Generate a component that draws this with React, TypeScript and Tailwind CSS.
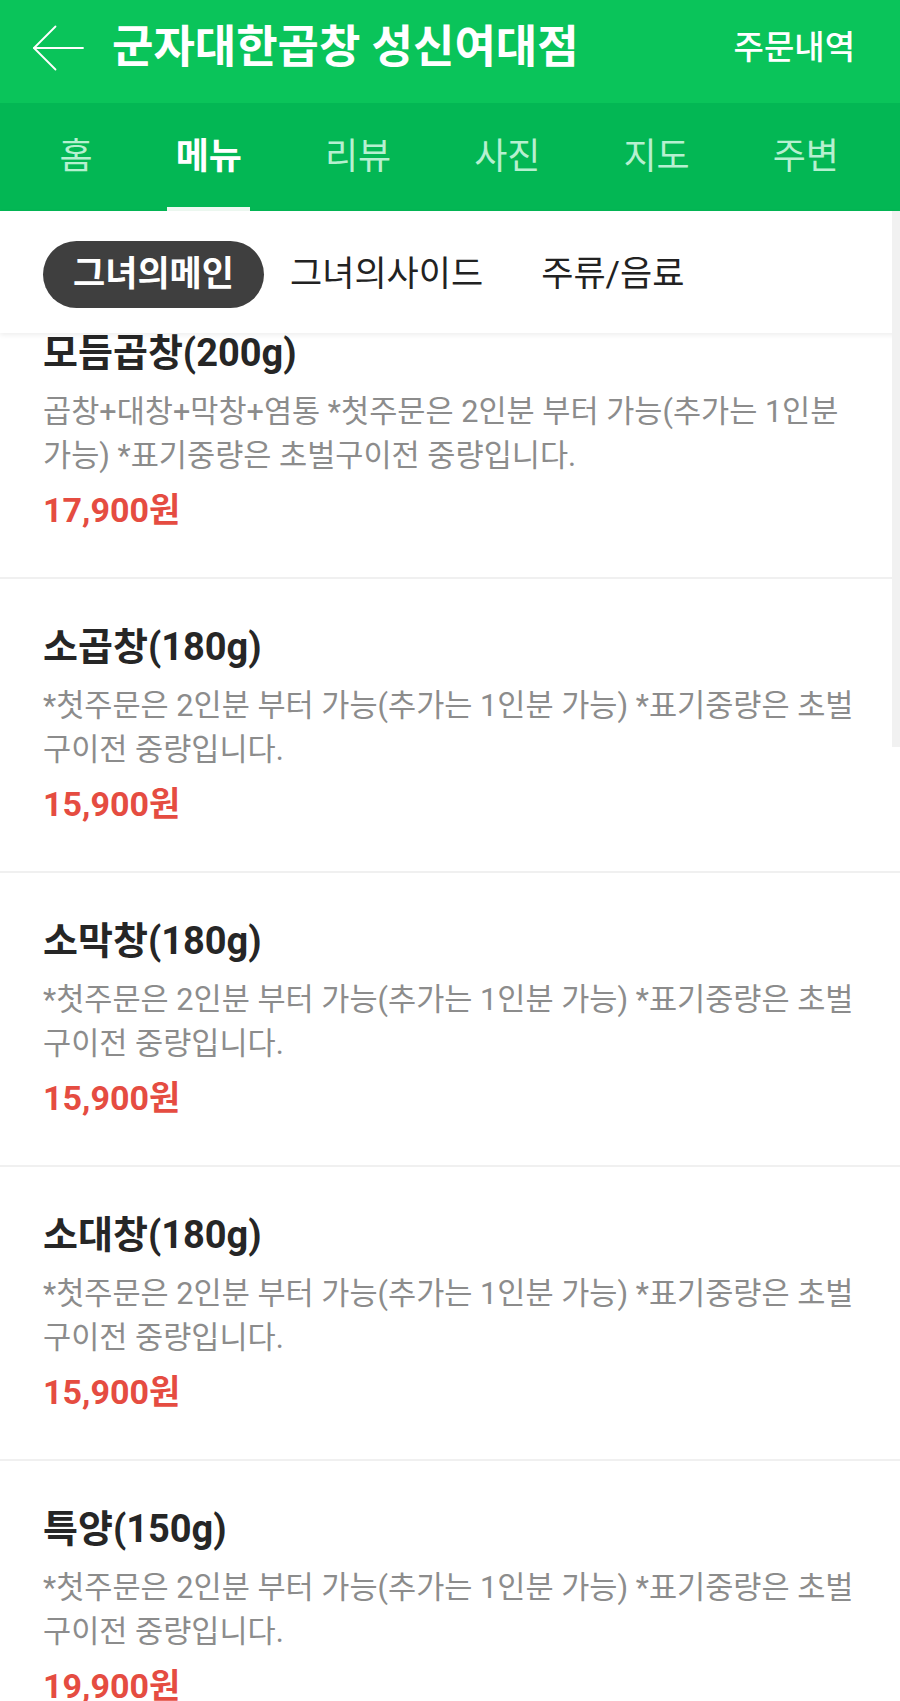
import React from "react";

const FONT = { fontFamily: 'Roboto, "Noto Sans CJK KR", "Noto Sans", sans-serif' };

const L1 = "*첫주문은 2인분 부터 가능(추가는 1인분 가능) *표기중량은 초벌";
const L2 = "구이전 중량입니다.";

const items = [
  {
    name: "모듬곱창(200g)",
    desc: ["곱창+대창+막창+염통 *첫주문은 2인분 부터 가능(추가는 1인분", "가능) *표기중량은 초벌구이전 중량입니다."],
    price: "17,900원",
  },
  { name: "소곱창(180g)", desc: [L1, L2], price: "15,900원" },
  { name: "소막창(180g)", desc: [L1, L2], price: "15,900원" },
  { name: "소대창(180g)", desc: [L1, L2], price: "15,900원" },
  { name: "특양(150g)", desc: [L1, L2], price: "19,900원" },
];

const tabs = ["홈", "메뉴", "리뷰", "사진", "지도", "주변"];

export default function App() {
  return (
    <div className="relative w-[900px] h-[1701px] overflow-hidden bg-white" style={FONT}>
      {/* Top bar */}
      <div className="h-[103px] bg-[#0ac45a] flex items-center pl-[32px] pr-[45px] pb-[8px]">
        <svg width="52" height="46" viewBox="0 0 52 46" fill="none" className="shrink-0">
          <path d="M2 23 H51" stroke="#ffffff" strokeWidth="1.8" strokeLinecap="round" />
          <path d="M23.5 1.5 L2 23 L23.5 44.5" stroke="#ffffff" strokeWidth="1.8" strokeLinecap="round" strokeLinejoin="round" />
        </svg>
        <div className="ml-[28px] text-[45px] font-bold text-white leading-none whitespace-nowrap">
          군자대한곱창 성신여대점
        </div>
        <div className="ml-auto text-[33px] font-medium text-white leading-none whitespace-nowrap">주문내역</div>
      </div>

      {/* Tabs */}
      <div className="h-[108px] bg-[#03b754] flex items-stretch pl-[18px]">
        {tabs.map((t, i) => (
          <div
            key={t}
            className={
              "relative flex items-center px-[41.5px] text-[36px] leading-none whitespace-nowrap " +
              (i === 1 ? "text-white font-bold" : "text-[#b6f0d0]")
            }
          >
            {t}
            {i === 1 && <div className="absolute left-[33px] right-[33px] bottom-0 h-[4px] bg-[#eefaf2]" />}
          </div>
        ))}
      </div>

      {/* Category bar */}
      <div className="relative z-10 h-[122px] bg-white flex items-start pt-[30px] pl-[43px] shadow-[0_2px_5px_rgba(0,0,0,0.07)]">
        <div className="h-[67px] px-[30px] rounded-full bg-[#3f3f3f] text-white font-bold text-[35px] leading-none flex items-center whitespace-nowrap">
          그녀의메인
        </div>
        <div className="h-[67px] pl-[26px] pr-[30px] text-[#222222] text-[35px] leading-none flex items-center whitespace-nowrap">
          그녀의사이드
        </div>
        <div className="h-[67px] px-[28px] text-[#222222] text-[35px] leading-none flex items-center whitespace-nowrap">
          주류/음료
        </div>
      </div>

      {/* Menu list */}
      <div className="flex flex-col">
        {items.map((it, i) => (
          <div
            key={i}
            className={
              "pl-[43px] pr-[10px] pb-[47px] " +
              (i === 0 ? "-mt-[2px]" : "border-t-2 border-[#f0f0f0] pt-[46px]")
            }
          >
            <div className="text-[38px] font-bold leading-[44px] text-[#262626] whitespace-nowrap">{it.name}</div>
            <div className="mt-[15px] text-[30.6px] leading-[44px] text-[#8c8c8c] whitespace-nowrap">
              {it.desc[0]}
              <br />
              {it.desc[1]}
            </div>
            <div className="mt-[12px] text-[34px] font-bold leading-[40px] text-[#e54c41] whitespace-nowrap">
              {it.price}
            </div>
          </div>
        ))}
      </div>

      {/* Scrollbar thumb overlay */}
      <div className="absolute right-0 top-[211px] w-[8px] h-[536px] bg-[#f1f1f1] z-20" />
    </div>
  );
}
